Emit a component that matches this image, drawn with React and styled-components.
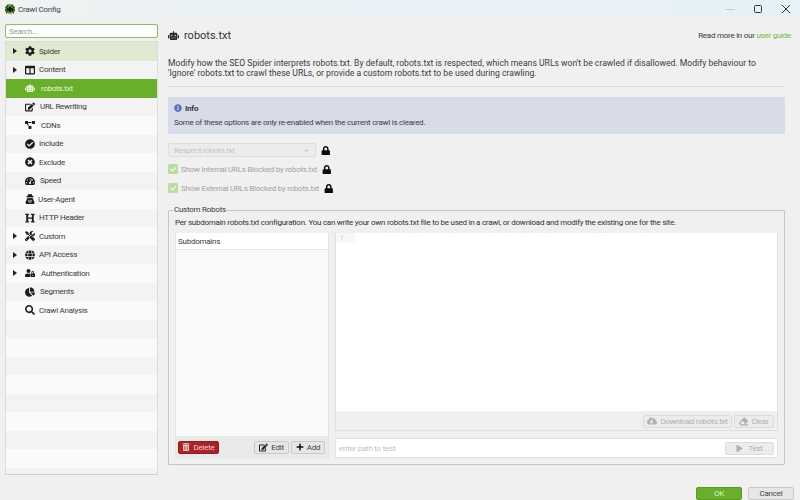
import React from 'react';
import styled, { createGlobalStyle } from 'styled-components';
import {
  FaCog, FaColumns, FaRobot, FaEdit, FaProjectDiagram, FaCheckCircle, FaTimesCircle,
  FaTachometerAlt, FaUserSecret, FaHeading, FaTools, FaGlobe, FaUserLock, FaChartPie,
  FaSearch, FaInfoCircle, FaLock, FaTrashAlt, FaPlus, FaCloudDownloadAlt, FaEraser,
  FaPlay, FaCheck, FaSpider, FaCaretDown,
} from 'react-icons/fa';

const Global = createGlobalStyle`
  html, body { margin: 0; padding: 0; background: #f0f0f0; }
  * { box-sizing: border-box; }
  body { font-family: Roboto, "Liberation Sans", sans-serif; font-size: 8px; letter-spacing: -0.25px; color: #333; }
`;

const Window = styled.div`
  width: 800px; height: 500px; overflow: hidden;
  display: flex; flex-direction: column; background: #f0f0f0;
`;
const TitleBar = styled.div`
  height: 18px; flex: none; display: flex; align-items: center; padding-left: 5px;
  background: linear-gradient(90deg, #eef3f2 0%, #e9f1f6 50%, #e6f1f8 100%);
`;
const Logo = styled.span`
  width: 10px; height: 10px; border-radius: 50%; background: #6aa83a; color: #10180a;
  display: flex; align-items: center; justify-content: center; font-size: 10px;
`;
const TitleText = styled.span`margin-left: 3px; font-size: 8px; color: #444; flex: 1;`;
const WinBtn = styled.span`
  width: 28px; height: 18px; display: flex; align-items: center; justify-content: center;
`;
const Body = styled.div`flex: 1; display: flex; min-height: 0; position: relative;`;
const Side = styled.div`
  width: 168px; flex: none; padding: 6px 0 0 5px; display: flex; flex-direction: column;
`;
const Search = styled.input`
  width: 153px; height: 14px; border: 1px solid #8dc356; border-radius: 2px; background: #fff;
  font: 8px Roboto, sans-serif; letter-spacing: -0.25px; padding: 0 3px; outline: none; flex: none;
  &::placeholder { color: #9a9a9a; }
`;
const Tree = styled.div`
  margin-top: 3px; width: 153px; height: 434px; overflow: hidden; flex: none;
  border: 1px solid #dcdcdc; border-bottom: 1px solid #cfcfcf;
`;
const Row = styled.div`
  height: 18.5px; display: flex; align-items: center; position: relative;
  background: ${p => p.$sel ? '#69b02a' : p.$hover ? '#deead0' : p.$odd ? '#f3f3f3' : '#fafafa'};
  color: ${p => p.$sel ? '#e8f5da' : '#3a3a3a'};
  padding-left: 18px;
`;
const Caret = styled.span`
  position: absolute; left: 7px; top: 6px; width: 0; height: 0;
  border-left: 4px solid #222; border-top: 3px solid transparent; border-bottom: 3px solid transparent;
`;
const RowIcon = styled.span`
  width: 12px; display: flex; justify-content: center; font-size: 10px;
  color: ${p => p.$sel ? '#e8f5da' : '#1c1c1c'};
`;
const RowLabel = styled.span`margin-left: ${p => p.$ml ?? 3}px; font-size: 8px; white-space: nowrap;`;

const Main = styled.div`
  flex: 1; padding: 0 15px 0 0; display: flex; flex-direction: column;
`;
const Head = styled.div`
  display: flex; align-items: center; height: 16px; margin-top: 9px; color: #2b2b2b;
`;
const HeadTitle = styled.span`font-size: 11px; letter-spacing: 0; margin-left: 5px; flex: 1; color: #333;`;
const HeadLink = styled.span`font-size: 8px; color: #3a3a3a; margin-right: -6px;`;
const Green = styled.span`color: #76b83e;`;
const Desc = styled.p`
  margin: 15px 0 0; font-size: 8.65px; letter-spacing: 0; line-height: 10.2px; color: #3c3c3c; white-space: nowrap;
`;
const Hr = styled.div`height: 1px; background: #dcdcdc; margin-top: 8px; flex: none;`;
const Info = styled.div`
  margin-top: 10px; height: 37px; background: #d8dce9; padding: 6px 6px; flex: none;
`;
const InfoHead = styled.div`
  display: flex; align-items: center; gap: 3px; font-weight: 700; font-size: 8px; color: #3a3a3a; height: 10px;
`;
const InfoIcon = styled.span`color: #5b72b8; font-size: 8px; display: flex;`;
const InfoText = styled.div`margin-top: 5px; font-size: 8px; color: #3f3f3f; white-space: nowrap;`;
const OptRow = styled.div`
  display: flex; align-items: center; height: 14px; margin-top: ${p => p.$mt}px; flex: none;
`;
const Combo = styled.div`
  width: 148px; height: 14px; border: 1px solid #dedede; border-radius: 2px; background: #ececec;
  display: flex; align-items: center; justify-content: space-between; padding: 0 5px;
  color: #c4c4c4; font-size: 8px;
`;
const Lock = styled.span`
  font-size: 9.5px; color: #0a0a0a; display: flex; margin-left: ${p => p.$ml}px;
`;
const Check = styled.span`
  width: 10px; height: 10px; border-radius: 1.5px; background: #b9dca0; color: #eef7e6;
  display: flex; align-items: center; justify-content: center; font-size: 6.5px;
`;
const CheckLabel = styled.span`margin-left: 3px; color: #a3a3a3; font-size: 8px;`;
const Group = styled.fieldset`
  margin: 10px 0 0; padding: 0 6px 6px; border: 1px solid #c6c6c6; height: 260px; flex: none;
  border-radius: 1px; min-width: 0; display: block;
`;
const Legend = styled.legend`
  font-size: 8px; color: #3a3a3a; padding: 0 1px; margin-left: -2px; line-height: 10px;
`;
const GroupNote = styled.div`font-size: 8px; color: #333; height: 10px; line-height: 10px; white-space: nowrap; margin-top: 3px;`;
const Panels = styled.div`display: flex; gap: 6px; margin-top: 5px; height: 225px;`;
const Left = styled.div`
  width: 154px; flex: none; display: flex; flex-direction: column; border: 1px solid #e4e4e4; border-top: 0;
`;
const ListHead = styled.div`
  height: 16px; background: #fff; font-size: 8px; color: #3a3a3a; display: flex; align-items: center; padding-left: 2px; flex: none;
`;
const ListBody = styled.div`flex: 1; background: #f9f9f9; border-top: 1px solid #e8e8e8;`;
const ListBar = styled.div`
  height: 21px; flex: none; background: #eaeaea; display: flex; align-items: center; padding: 1px 3px 0 2px; gap: 2px;
`;
const Btn = styled.div`
  height: 13px; width: ${p => p.$w}px; border-radius: 2px; display: flex; align-items: center; justify-content: center; gap: 3px;
  font-size: 8px; flex: none;
  background: ${p => p.$danger ? '#ab2327' : p.$off ? '#ececec' : '#e6e6e6'};
  border: 1px solid ${p => p.$danger ? '#8f1d20' : p.$off ? '#dcdcdc' : '#c8c8c8'};
  color: ${p => p.$danger ? '#f2c9c9' : p.$off ? '#b0b0b0' : '#444'};
  margin-left: ${p => p.$auto ? 'auto' : '0'};
`;
const BtnIcon = styled.span`
  display: flex; font-size: ${p => p.$s || 8}px; color: ${p => p.$c || 'inherit'};
`;
const Right = styled.div`flex: 1; display: flex; flex-direction: column; gap: 7px; min-width: 0;`;
const Editor = styled.div`
  height: 198px; flex: none; display: flex; flex-direction: column; border: 1px solid #dedede; border-top: 0;
`;
const EditorArea = styled.div`flex: 1; background: #fff; display: flex;`;
const Gutter = styled.div`
  width: 19px; height: 10px; background: #f7f7f7; color: #c4c4c4; font-size: 6.5px; padding: 1px 0 0 4px; line-height: 9px;
`;
const EditorBar = styled.div`
  height: 19px; background: #efefef; flex: none; display: flex; justify-content: flex-end; align-items: center;
  gap: 2px; padding: 1px 3px 0 0;
`;
const TestBar = styled.div`
  height: 20px; flex: none; background: #fff; border: 1px solid #e2e2e2; display: flex; align-items: center;
  padding: 0 3px 0 3px; color: #c2c2c2; font-size: 8px; justify-content: space-between;
`;
const Footer = styled.div`
  position: absolute; right: 6px; bottom: 0; display: flex; gap: 6px;
`;
const FootBtn = styled.div`
  width: 46px; height: 13px; border-radius: 2px; display: flex; align-items: center; justify-content: center; font-size: 8px;
  background: ${p => p.$ok ? '#69b02a' : '#e6e6e6'};
  border: 1px solid ${p => p.$ok ? '#5a9a24' : '#c8c8c8'};
  color: ${p => p.$ok ? '#dcefc8' : '#444'};
`;
const ML = styled.span`margin-left: ${p => p.$v}px;`;

const items = [
  { t: 'Spider', I: FaCog, c: 1, ml: 3, hover: 1 },
  { t: 'Content', I: FaColumns, c: 1, ml: 3 },
  { t: 'robots.txt', I: FaRobot, sel: 1, ml: 5 },
  { t: 'URL Rewriting', I: FaEdit, ml: 4 },
  { t: 'CDNs', I: FaProjectDiagram, ml: 5 },
  { t: 'Include', I: FaCheckCircle, ml: 3 },
  { t: 'Exclude', I: FaTimesCircle, ml: 3 },
  { t: 'Speed', I: FaTachometerAlt, ml: 4 },
  { t: 'User-Agent', I: FaUserSecret, ml: 2 },
  { t: 'HTTP Header', I: FaHeading, ml: 3 },
  { t: 'Custom', I: FaTools, c: 1, ml: 3 },
  { t: 'API Access', I: FaGlobe, c: 1, ml: 3 },
  { t: 'Authentication', I: FaUserLock, c: 1, ml: 5 },
  { t: 'Segments', I: FaChartPie, ml: 4 },
  { t: 'Crawl Analysis', I: FaSearch, ml: 3 },
];
const blanks = Array.from({ length: 9 }, (_, i) => i);

export default function App() {
  return (
    <Window>
      <Global />
      <TitleBar>
        <Logo><FaSpider /></Logo>
        <TitleText>Crawl Config</TitleText>
        <WinBtn>
          <svg width="10" height="10" viewBox="0 0 10 10"><path d="M0 5.5h10" stroke="#c9ced1" strokeWidth="1" /></svg>
        </WinBtn>
        <WinBtn>
          <svg width="10" height="10" viewBox="0 0 10 10"><rect x="1.5" y="1.5" width="7" height="7" rx="1" fill="none" stroke="#333" strokeWidth="1" /></svg>
        </WinBtn>
        <WinBtn>
          <svg width="10" height="10" viewBox="0 0 10 10"><path d="M1 1l8 8M9 1l-8 8" stroke="#333" strokeWidth="1" /></svg>
        </WinBtn>
      </TitleBar>
      <Body>
        <Side>
          <Search placeholder="Search..." />
          <Tree>
            {items.map((it, i) => (
              <Row key={it.t} $odd={i % 2 === 1} $sel={it.sel} $hover={it.hover}>
                {it.c ? <Caret /> : null}
                <RowIcon $sel={it.sel}><it.I /></RowIcon>
                <RowLabel $ml={it.ml}>{it.t}</RowLabel>
              </Row>
            ))}
            {blanks.map(i => <Row key={i} $odd={(i + items.length) % 2 === 1} />)}
          </Tree>
        </Side>
        <Main>
          <Head>
            <FaRobot size={11} />
            <HeadTitle>robots.txt</HeadTitle>
            <HeadLink>Read more in our <Green>user guide</Green></HeadLink>
          </Head>
          <Desc>
            Modify how the SEO Spider interprets robots.txt. By default, robots.txt is respected, which means URLs won't be crawled if disallowed. Modify behaviour to<br />
            'Ignore' robots.txt to crawl these URLs, or provide a custom robots.txt to be used during crawling.
          </Desc>
          <Hr />
          <Info>
            <InfoHead><InfoIcon><FaInfoCircle /></InfoIcon>Info</InfoHead>
            <InfoText>Some of these options are only re-enabled when the current crawl is cleared.</InfoText>
          </Info>
          <OptRow $mt={9}>
            <Combo>Respect robots.txt<FaCaretDown size={7} /></Combo>
            <Lock $ml={5}><FaLock /></Lock>
          </OptRow>
          <OptRow $mt={5}>
            <Check><FaCheck /></Check>
            <CheckLabel>Show Internal URLs Blocked by robots.txt</CheckLabel>
            <Lock $ml={5}><FaLock /></Lock>
          </OptRow>
          <OptRow $mt={5}>
            <Check><FaCheck /></Check>
            <CheckLabel>Show External URLs Blocked by robots.txt</CheckLabel>
            <Lock $ml={5}><FaLock /></Lock>
          </OptRow>
          <Group>
            <Legend>Custom Robots</Legend>
            <GroupNote>Per subdomain robots.txt configuration. You can write your own robots.txt file to be used in a crawl, or download and modify the existing one for the site.</GroupNote>
            <Panels>
              <Left>
                <ListHead>Subdomains</ListHead>
                <ListBody />
                <ListBar>
                  <Btn $danger $w={41}><BtnIcon $c="#eec9c9"><FaTrashAlt /></BtnIcon>Delete</Btn>
                  <Btn $auto $w={35}><BtnIcon $s={9} $c="#222"><FaEdit /></BtnIcon>Edit</Btn>
                  <Btn $w={34}><BtnIcon $c="#111"><FaPlus /></BtnIcon>Add</Btn>
                </ListBar>
              </Left>
              <Right>
                <Editor>
                  <EditorArea><Gutter>1</Gutter></EditorArea>
                  <EditorBar>
                    <Btn $off $w={89}><BtnIcon $s={10}><FaCloudDownloadAlt /></BtnIcon>Download robots.txt</Btn>
                    <Btn $off $w={40}><BtnIcon $s={9}><FaEraser /></BtnIcon>Clear</Btn>
                  </EditorBar>
                </Editor>
                <TestBar>
                  enter path to test
                  <Btn $off $w={49}><BtnIcon $s={7}><FaPlay /></BtnIcon><ML $v={2}>Test</ML></Btn>
                </TestBar>
              </Right>
            </Panels>
          </Group>
        </Main>
        <Footer>
          <FootBtn $ok>OK</FootBtn>
          <FootBtn>Cancel</FootBtn>
        </Footer>
      </Body>
    </Window>
  );
}
